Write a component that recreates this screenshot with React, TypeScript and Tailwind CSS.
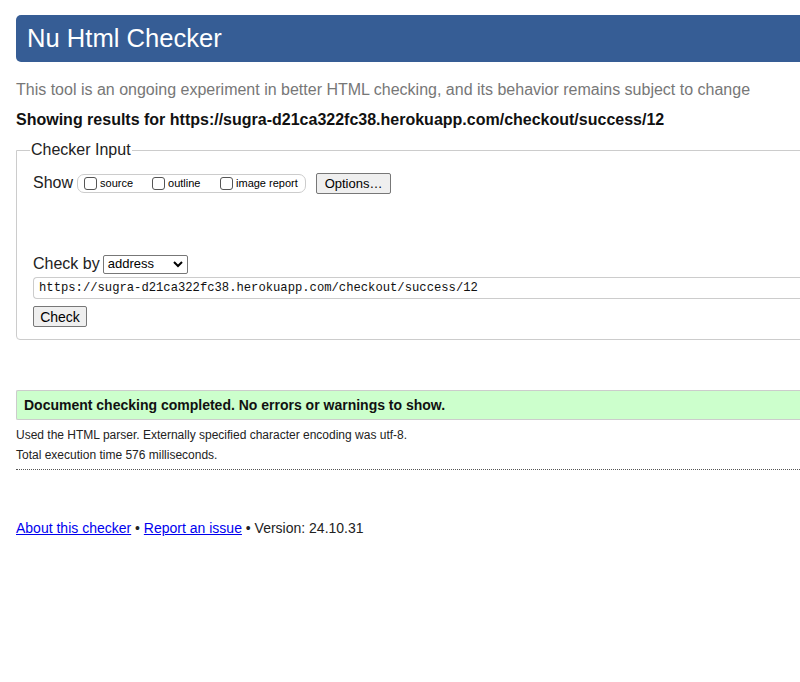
import React from 'react';

const Box: React.FC = () => (
	<span className="inline-block w-[13px] h-[13px] border border-[#555] rounded-[3px] bg-white mr-[3px] align-[-2px]" />
);

const App: React.FC = () => {
	const url = 'https://sugra-d21ca322fc38.herokuapp.com/checkout/success/12';

	return (
		<div className="w-full h-[682px] overflow-hidden bg-white font-['Liberation_Sans',Arial,sans-serif] text-black">
			<div className="w-[840px] pl-4">
				<div className="mt-[15px] h-[47px] flex items-center pl-[11px] bg-[#365d95] rounded-l-[5px]">
					<h1 className="text-[25.6px] text-white leading-none">Nu Html Checker</h1>
				</div>

				<p className="mt-[18px] text-[16px] leading-[20px] text-[#777]">
					This tool is an ongoing experiment in better HTML checking, and its behavior remains subject to change
				</p>
				<p className="mt-[10px] text-[16px] leading-[20px] font-bold text-[#111]">
					Showing results for { url }
				</p>

				<fieldset className="mt-[11px] h-[199px] border border-[#ccc] rounded-bl-[4px] px-4 pt-[6px]">
					<legend className="px-[1px] ml-[-3px] text-[16px] leading-[18px] text-[#222]">Checker Input</legend>
					<div className="flex items-center h-[22px] mt-[7px]">
						<span className="text-[16px] text-[#222]">Show</span>
						<div className="ml-[4px] h-[19px] w-[229px] flex items-center border border-[#ccc] rounded-[7px] pl-[6px] text-[11px]">
							<label className="flex items-center w-[68px]"><Box />source</label>
							<label className="flex items-center w-[68px]"><Box />outline</label>
							<label className="flex items-center"><Box />image report</label>
						</div>
						<button className="ml-[10px] h-[21px] w-[75px] border border-[#777] rounded-[2px] bg-[#efefef] text-[13px] leading-none">Options…</button>
					</div>

					<div className="flex items-center mt-[60px] h-[20px]">
						<span className="text-[16px] text-[#222]">Check by</span>
						<div className="ml-[3px] h-[19px] w-[85px] flex items-center justify-between border border-[#777] rounded-[2px] px-[4px] text-[13px]">
							<span>address</span>
							<svg width="10" height="7" viewBox="0 0 10 7" fill="none" stroke="#000" strokeWidth="2"><path d="M1 1l4 4 4-4" /></svg>
						</div>
					</div>

					<div className="mt-[3px] h-[22px] flex items-center border border-[#ccc] border-r-0 rounded-l-[4px] pl-[5px] font-['Liberation_Mono',monospace] text-[12.2px] text-[#111]">
						{ url }
					</div>

					<button className="mt-[7px] h-[21px] w-[54px] border border-[#777] rounded-[2px] bg-[#efefef] text-[14px] leading-none">Check</button>
				</fieldset>

				<div className="mt-[50px] h-[30px] flex items-center pl-[7px] bg-[#ccffcc] border border-[#ccc] border-r-0 rounded-l-[2px]">
					<span className="text-[14px] font-bold text-[#111]">Document checking completed. No errors or warnings to show.</span>
				</div>
				<p className="mt-[7px] text-[12px] leading-[16px] text-[#222]">Used the HTML parser. Externally specified character encoding was utf-8.</p>
				<p className="mt-[4px] text-[12px] leading-[16px] text-[#222]">Total execution time 576 milliseconds.</p>
				<div className="mt-[6px] border-t border-dotted border-[#555]" />

				<p className="mt-[49px] text-[14px] leading-[18px] text-[#222]">
					<a href="#" className="text-[#0000ee] underline">About this checker</a>
					{ ' • ' }
					<a href="#" className="text-[#0000ee] underline">Report an issue</a>
					{ ' • Version: 24.10.31' }
				</p>
			</div>
		</div>
	);
};

export default App;
